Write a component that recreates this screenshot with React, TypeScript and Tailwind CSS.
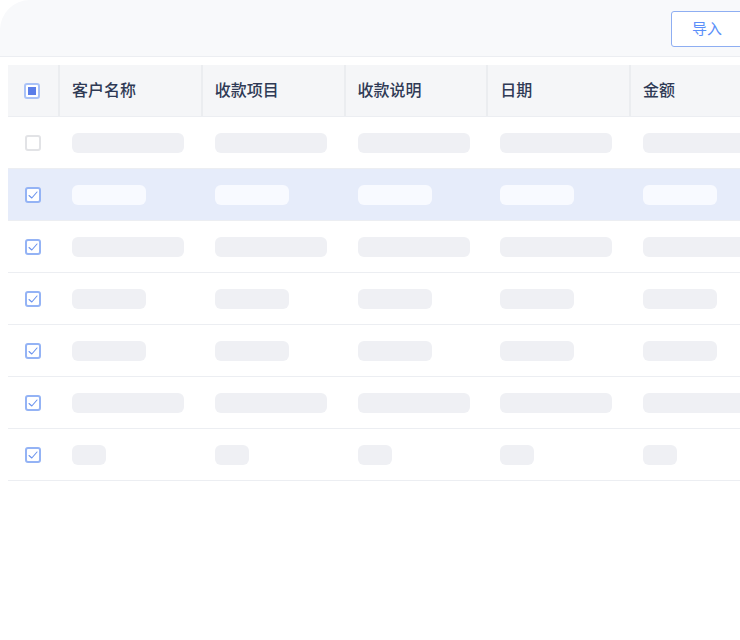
import React from 'react';

const columns = ['客户名称', '收款项目', '收款说明', '日期', '金额'];

type Size = 'long' | 'medium' | 'short';

const rows: { checked: boolean; selected?: boolean; size: Size }[] = [
  { checked: false, size: 'long' },
  { checked: true, selected: true, size: 'medium' },
  { checked: true, size: 'long' },
  { checked: true, size: 'medium' },
  { checked: true, size: 'medium' },
  { checked: true, size: 'long' },
  { checked: true, size: 'short' },
];

const widthClass: Record<Size, string> = {
  long: 'w-[112px]',
  medium: 'w-[74px]',
  short: 'w-[34px]',
};

const Checkbox: React.FC<{ checked?: boolean; partial?: boolean }> = ({ checked, partial }) => {
  if (partial) {
    return (
      <span className="flex h-4 w-4 items-center justify-center rounded-[3px] border-2 border-[#a9c2f7] bg-white">
        <span className="h-[8px] w-[8px] bg-[#5b7ee8]" />
      </span>
    );
  }
  if (checked) {
    return (
      <span className="flex h-4 w-4 items-center justify-center rounded-[3px] border-2 border-[#94b3f5] bg-white">
        <svg width="12" height="12" viewBox="0 0 12 12" fill="none">
          <polyline points="2,6.5 4.8,9 10,3" stroke="#6b93ee" strokeWidth="1.1" strokeLinecap="round" strokeLinejoin="round" />
        </svg>
      </span>
    );
  }
  return <span className="h-4 w-4 rounded-[3px] border-2 border-[#e2e3e6] bg-white" />;
};

export default function App() {
  return (
    <div
      className="h-[640px] w-[740px] overflow-hidden bg-white"
      style={{ fontFamily: '"Noto Sans CJK SC", "Noto Sans", sans-serif' }}
    >
      <div className="flex h-[57px] w-[770px] items-start justify-end rounded-tl-[30px] rounded-tr-[30px] border-b border-[#eceef2] bg-[#f8f9fb] pr-[27px] pt-[11px]">
        <button className="flex h-[36px] w-[72px] items-center justify-center rounded-[3px] border border-[#8eaef2] bg-white pb-[2px] text-[15px] text-[#5b8ff9]">
          导入
        </button>
      </div>

      <div className="ml-2 mt-2 w-[780px]">
        <div className="grid h-[52px] grid-cols-[52px_repeat(5,142.75px)] border-b border-[#eceef2] bg-[#f5f6f8]">
          <div className="flex items-center justify-center border-r-2 border-[#ebedf0] pr-[2px]">
            <Checkbox partial />
          </div>
          {columns.map((c) => (
            <div
              key={c}
              className="flex items-center border-r-2 border-[#ebedf0] pb-[4px] pl-3 text-[16px] font-medium text-[#2f3a55]"
            >
              {c}
            </div>
          ))}
        </div>

        {rows.map((r, i) => (
          <div
            key={i}
            className={`grid h-[52px] grid-cols-[52px_repeat(5,142.75px)] border-b border-[#eceef2] ${
              r.selected ? 'bg-[#e6ecfa]' : 'bg-white'
            }`}
          >
            <div className="flex items-center justify-center pr-[2px]">
              <Checkbox checked={r.checked} />
            </div>
            {columns.map((c, j) => (
              <div key={c} className="flex items-center pl-3">
                <span
                  className={`h-5 rounded-[6px] ${
                    j === 4 && r.size === 'long' ? 'w-[120px]' : widthClass[r.size]
                  } ${r.selected ? 'bg-[#f8faff]' : 'bg-[#eff0f4]'}`}
                />
              </div>
            ))}
          </div>
        ))}
      </div>
    </div>
  );
}
